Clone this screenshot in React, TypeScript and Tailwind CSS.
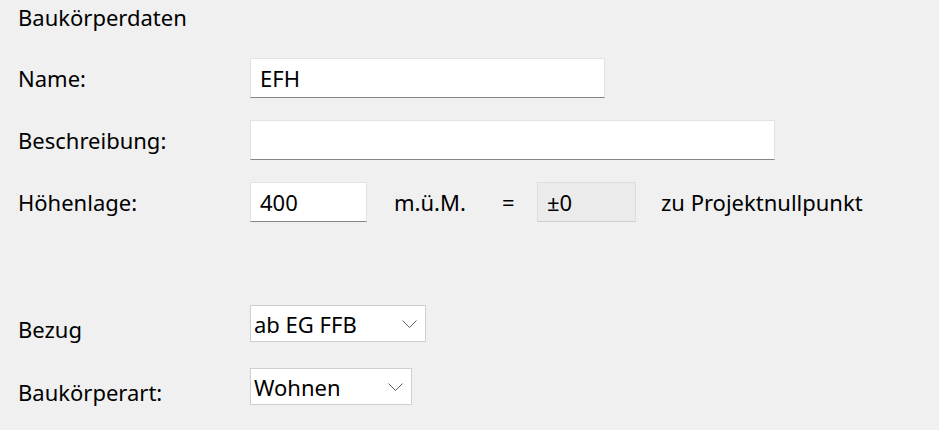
import React from "react";

const Chevron: React.FC = () => (
  <svg width="15" height="8" viewBox="0 0 15 8" className="shrink-0">
    <polyline points="0.5,0.5 7.5,7.5 14.5,0.5" fill="none" stroke="#606060" strokeWidth="1" />
  </svg>
);

const TextBox: React.FC<{ value?: string; className?: string }> = ({ value, className = "" }) => (
  <div
    className={`h-10 flex items-center bg-white border border-[#e3e3e3] border-b-[#858585] px-[9px] ${className}`}
  >
    <span className="leading-[30px]">{value}</span>
  </div>
);

const Combo: React.FC<{ value: string; className?: string }> = ({ value, className = "" }) => (
  <div
    className={`h-[37px] flex items-center justify-between bg-white border border-[#cfcfcf] pl-[3px] pr-[8px] ${className}`}
  >
    <span className="leading-[30px]">{value}</span>
    <Chevron />
  </div>
);

export default function App() {
  return (
    <div
      className="w-[939px] h-[430px] bg-[#f0f0f0] text-black text-[22px] pl-[18px] pt-[2px] overflow-hidden"
      style={{ fontFamily: '"Noto Sans", "Open Sans", sans-serif' }}
    >
      <div className="leading-[30px]">Baukörperdaten</div>

      <div className="flex items-center mt-[26px]">
        <span className="w-[232px] leading-[30px]">Name:</span>
        <TextBox value="EFH" className="w-[355px]" />
      </div>

      <div className="flex items-center mt-[22px]">
        <span className="w-[232px] leading-[30px]">Beschreibung:</span>
        <TextBox className="w-[525px]" />
      </div>

      <div className="flex items-center mt-[22px]">
        <span className="w-[232px] leading-[30px]">Höhenlage:</span>
        <TextBox value="400" className="w-[117px]" />
        <span className="ml-[27px] w-[108px] leading-[30px]">m.ü.M.</span>
        <span className="w-[35px] leading-[30px]">=</span>
        <div className="w-[99px] h-10 flex items-center bg-[#ebebeb] border border-[#dedede] border-b-[#cfcfcf] px-[9px]">
          <span className="leading-[30px]">±0</span>
        </div>
        <span className="ml-[25px] leading-[30px]">zu Projektnullpunkt</span>
      </div>

      <div className="flex items-start mt-[83px] h-[37px]">
        <span className="w-[232px] pt-[9px] leading-[30px]">Bezug</span>
        <Combo value="ab EG FFB" className="w-[176px]" />
      </div>

      <div className="flex items-start mt-[26px] h-[37px]">
        <span className="w-[232px] pt-[9px] leading-[30px]">Baukörperart:</span>
        <Combo value="Wohnen" className="w-[162px]" />
      </div>
    </div>
  );
}
